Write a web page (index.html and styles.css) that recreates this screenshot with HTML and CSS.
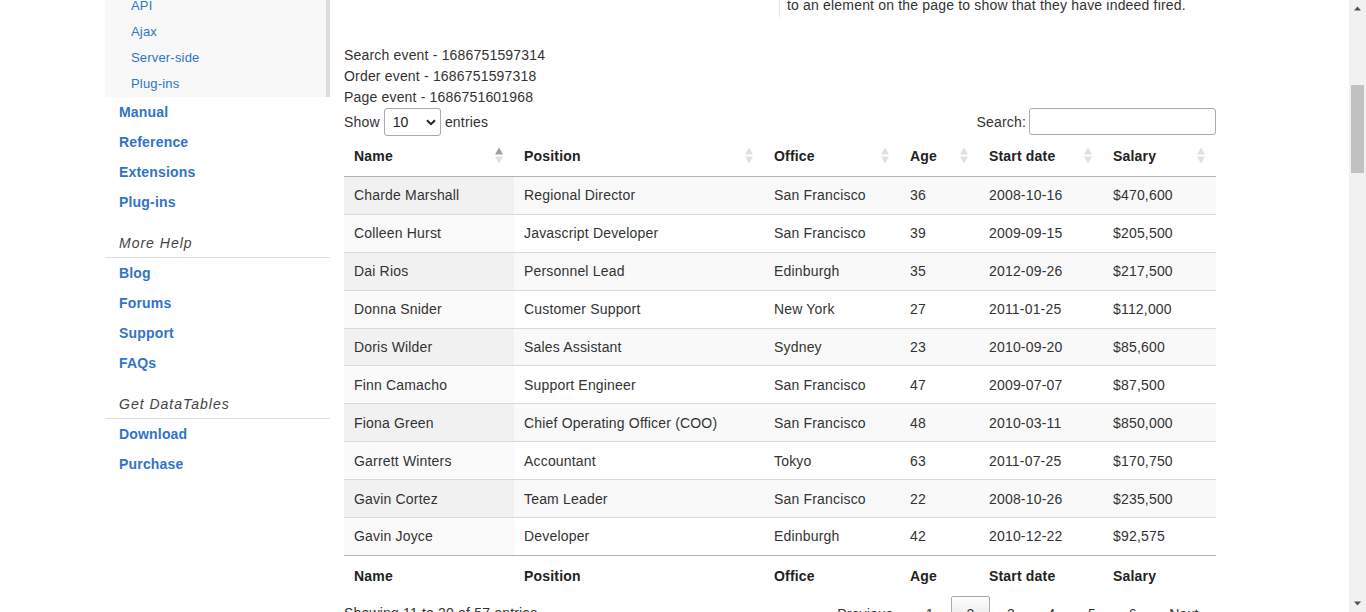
FILE: index.html
```html
<!DOCTYPE html>
<html lang="en">
<head>
<meta charset="utf-8">
<title>DataTables events example</title>
<link rel="stylesheet" href="styles.css">
</head>
<body>
<div class="screen">
  <div class="viewport">
    <div class="layout">
      <aside class="sidebar">
        <ul class="submenu">
          <li><a href="#">API</a></li>
          <li><a href="#">Ajax</a></li>
          <li><a href="#">Server-side</a></li>
          <li><a href="#">Plug-ins</a></li>
        </ul>
        <ul class="menu">
          <li><a href="#">Manual</a></li>
          <li><a href="#">Reference</a></li>
          <li><a href="#">Extensions</a></li>
          <li><a href="#">Plug-ins</a></li>
        </ul>
        <h4 class="menu-head">More Help</h4>
        <ul class="menu">
          <li><a href="#">Blog</a></li>
          <li><a href="#">Forums</a></li>
          <li><a href="#">Support</a></li>
          <li><a href="#">FAQs</a></li>
        </ul>
        <h4 class="menu-head">Get DataTables</h4>
        <ul class="menu">
          <li><a href="#">Download</a></li>
          <li><a href="#">Purchase</a></li>
        </ul>
      </aside>

      <main class="main">
        <div class="info-row">
          <div class="info-box">to an element on the page to show that they have indeed fired.</div>
        </div>

        <div class="events">
          <div>Search event - 1686751597314</div>
          <div>Order event - 1686751597318</div>
          <div>Page event - 1686751601968</div>
        </div>

        <div class="dt-wrapper">
          <div class="dt-top">
            <label class="dt-length">Show <span class="select-wrap"><select class="dt-select"><option>10</option><option>25</option><option>50</option><option>100</option></select><svg class="chev" width="10" height="7" viewBox="0 0 10 7"><polyline points="1,1.2 5,5.2 9,1.2" fill="none" stroke="#222" stroke-width="2"/></svg></span> entries</label>
            <label class="dt-filter"><span class="lbl">Search:</span><input class="dt-search" type="search"></label>
          </div>

          <table class="dt-table">
            <colgroup>
              <col class="c-name"><col class="c-pos"><col class="c-off"><col class="c-age"><col class="c-date"><col class="c-sal">
            </colgroup>
            <thead>
              <tr>
                <th><div class="th-in"><span>Name</span><svg class="sort" width="8" height="17" viewBox="0 0 8 17"><polygon class="up active" points="4,0.5 8,7.5 0,7.5"/><polygon class="down" points="0,9.5 8,9.5 4,16.5"/></svg></div></th>
                <th><div class="th-in"><span>Position</span><svg class="sort" width="8" height="17" viewBox="0 0 8 17"><polygon class="up" points="4,0.5 8,7.5 0,7.5"/><polygon class="down" points="0,9.5 8,9.5 4,16.5"/></svg></div></th>
                <th><div class="th-in"><span>Office</span><svg class="sort" width="8" height="17" viewBox="0 0 8 17"><polygon class="up" points="4,0.5 8,7.5 0,7.5"/><polygon class="down" points="0,9.5 8,9.5 4,16.5"/></svg></div></th>
                <th><div class="th-in"><span>Age</span><svg class="sort" width="8" height="17" viewBox="0 0 8 17"><polygon class="up" points="4,0.5 8,7.5 0,7.5"/><polygon class="down" points="0,9.5 8,9.5 4,16.5"/></svg></div></th>
                <th><div class="th-in"><span>Start date</span><svg class="sort" width="8" height="17" viewBox="0 0 8 17"><polygon class="up" points="4,0.5 8,7.5 0,7.5"/><polygon class="down" points="0,9.5 8,9.5 4,16.5"/></svg></div></th>
                <th><div class="th-in"><span>Salary</span><svg class="sort" width="8" height="17" viewBox="0 0 8 17"><polygon class="up" points="4,0.5 8,7.5 0,7.5"/><polygon class="down" points="0,9.5 8,9.5 4,16.5"/></svg></div></th>
              </tr>
            </thead>
            <tbody>
              <tr><td>Charde Marshall</td><td>Regional Director</td><td>San Francisco</td><td>36</td><td>2008-10-16</td><td>$470,600</td></tr>
              <tr><td>Colleen Hurst</td><td>Javascript Developer</td><td>San Francisco</td><td>39</td><td>2009-09-15</td><td>$205,500</td></tr>
              <tr><td>Dai Rios</td><td>Personnel Lead</td><td>Edinburgh</td><td>35</td><td>2012-09-26</td><td>$217,500</td></tr>
              <tr><td>Donna Snider</td><td>Customer Support</td><td>New York</td><td>27</td><td>2011-01-25</td><td>$112,000</td></tr>
              <tr><td>Doris Wilder</td><td>Sales Assistant</td><td>Sydney</td><td>23</td><td>2010-09-20</td><td>$85,600</td></tr>
              <tr><td>Finn Camacho</td><td>Support Engineer</td><td>San Francisco</td><td>47</td><td>2009-07-07</td><td>$87,500</td></tr>
              <tr><td>Fiona Green</td><td>Chief Operating Officer (COO)</td><td>San Francisco</td><td>48</td><td>2010-03-11</td><td>$850,000</td></tr>
              <tr><td>Garrett Winters</td><td>Accountant</td><td>Tokyo</td><td>63</td><td>2011-07-25</td><td>$170,750</td></tr>
              <tr><td>Gavin Cortez</td><td>Team Leader</td><td>San Francisco</td><td>22</td><td>2008-10-26</td><td>$235,500</td></tr>
              <tr><td>Gavin Joyce</td><td>Developer</td><td>Edinburgh</td><td>42</td><td>2010-12-22</td><td>$92,575</td></tr>
            </tbody>
            <tfoot>
              <tr><th>Name</th><th>Position</th><th>Office</th><th>Age</th><th>Start date</th><th>Salary</th></tr>
            </tfoot>
          </table>

          <div class="dt-bottom">
            <div class="dt-info">Showing 11 to 20 of 57 entries</div>
            <div class="dt-paginate">
              <a class="pg-btn" href="#">Previous</a><a class="pg-btn" href="#">1</a><a class="pg-btn current" href="#">2</a><a class="pg-btn" href="#">3</a><a class="pg-btn" href="#">4</a><a class="pg-btn" href="#">5</a><a class="pg-btn" href="#">6</a><a class="pg-btn" href="#">Next</a>
            </div>
          </div>
        </div>
      </main>
    </div>
  </div>

  <div class="scrollbar">
    <div class="sb-btn"><svg width="17" height="17" viewBox="0 0 17 17"><polygon points="8.5,6.5 12,10.5 5,10.5" fill="#505050"/></svg></div>
    <div class="sb-track"><div class="sb-thumb"></div></div>
    <div class="sb-btn"><svg width="17" height="17" viewBox="0 0 17 17"><polygon points="5,6.5 12,6.5 8.5,10.5" fill="#505050"/></svg></div>
  </div>
</div>
</body>
</html>
```

FILE: styles.css
```css
html, body {
  margin: 0;
  padding: 0;
  height: 612px;
  overflow: hidden;
  background: #fff;
}

body {
  font-family: "Liberation Sans", Arial, Helvetica, sans-serif;
  font-size: 14px;
  line-height: 21px;
  letter-spacing: 0.18px;
  color: #333;
}

a {
  text-decoration: none;
}

.screen {
  display: flex;
  width: 1366px;
  height: 612px;
}

.viewport {
  flex: 1;
  height: 612px;
  overflow: hidden;
}

.layout {
  display: flex;
  align-items: flex-start;
  margin-top: -8px;
  padding-left: 105px;
}

/* ---------- sidebar ---------- */
.sidebar {
  width: 225px;
  flex: none;
}

.submenu {
  list-style: none;
  margin: 0;
  padding: 1px 0 0 26px;
  background: #f8f8f8;
  border-right: 4px solid #ddd;
}

.submenu li {
  line-height: 26px;
  font-size: 13px;
}

.submenu a {
  color: #3174c7;
}

.menu {
  list-style: none;
  margin: 0;
  padding: 0;
}

.menu li {
  line-height: 30px;
  padding-left: 14px;
  font-size: 14px;
  font-weight: bold;
}

.menu a {
  color: #3174c7;
}

.menu-head {
  margin: 15px 0 0;
  padding: 0 0 3px 14px;
  line-height: 22px;
  font-size: 14px;
  font-weight: normal;
  font-style: italic;
  letter-spacing: 1px;
  color: #444;
  border-bottom: 1px solid #ddd;
}

/* ---------- main ---------- */
.main {
  width: 872px;
  margin-left: 14px;
  flex: none;
}

.info-row {
  display: flex;
  justify-content: flex-end;
  margin-top: 3px;
}

.info-box {
  width: 437px;
  box-sizing: border-box;
  border-left: 1px solid #e6e6e6;
  padding: 0 0 1px 7px;
  line-height: 21px;
}

.events {
  margin-top: 28px;
  line-height: 21px;
}

.dt-top {
  display: flex;
  justify-content: space-between;
  align-items: flex-start;
  height: 27px;
}

.dt-length,
.dt-filter {
  display: flex;
  align-items: center;
  height: 28px;
  white-space: pre;
}

.dt-filter {
  height: 27px;
}

.lbl {
  padding-top: 2px;
}

.select-wrap {
  display: inline-flex;
  align-items: center;
  position: relative;
}

.dt-select {
  -webkit-appearance: none;
  appearance: none;
  width: 57px;
  height: 28px;
  box-sizing: border-box;
  border: 1px solid #aaa;
  border-radius: 3px;
  padding: 0 0 0 8px;
  background: transparent;
  font-family: inherit;
  font-size: 14px;
  color: #222;
}

.chev {
  position: absolute;
  right: 5px;
  top: 11px;
  pointer-events: none;
}

.dt-search {
  width: 187px;
  height: 27px;
  box-sizing: border-box;
  margin: 0 0 0 3px;
  border: 1px solid #aaa;
  border-radius: 3px;
  padding: 5px;
  background: transparent;
  font-family: inherit;
  font-size: 14px;
}

/* ---------- table ---------- */
.dt-table {
  width: 872px;
  table-layout: fixed;
  border-collapse: separate;
  border-spacing: 0;
}

.c-name { width: 170px; }
.c-pos  { width: 250px; }
.c-off  { width: 136px; }
.c-age  { width: 79px; }
.c-date { width: 124px; }
.c-sal  { width: 113px; }

.dt-table thead th {
  text-align: left;
  font-weight: bold;
  color: #222;
  padding: 11px 11px 9px 10px;
  line-height: 21px;
  border-bottom: 1px solid #b3b3b3;
}

.th-in {
  display: flex;
  justify-content: space-between;
  align-items: center;
}

.sort {
  margin-top: -2px;
}

.sort polygon {
  fill: #e0e0e0;
}

.sort polygon.active {
  fill: #a0a0a0;
}

.dt-table tbody td {
  padding: 8.4px 10px 7.6px;
  line-height: 20.9px;
  border-top: 1px solid #d9d9d9;
  background: #fff;
  white-space: nowrap;
}

.dt-table tbody tr:first-child td {
  border-top: none;
}

.dt-table tbody tr:nth-child(odd) td {
  background: #f9f9f9;
}

.dt-table tbody tr:nth-child(odd) td:first-child {
  background: #f1f1f1;
}

.dt-table tbody tr:nth-child(even) td:first-child {
  background: #fafafa;
}

.dt-table tfoot th {
  text-align: left;
  font-weight: bold;
  color: #222;
  padding: 10px 10px 6px 10px;
  line-height: 21px;
  border-top: 1px solid #b3b3b3;
}

/* ---------- bottom ---------- */
.dt-bottom {
  display: flex;
  justify-content: space-between;
  align-items: flex-start;
}

.dt-info {
  padding-top: 10.5px;
}

.dt-paginate {
  padding-top: 3.5px;
  margin-right: 2px;
  display: flex;
}

.pg-btn {
  display: block;
  min-width: 21px;
  box-sizing: border-box;
  padding: 7px 14.3px;
  margin-left: 2px;
  text-align: center;
  border: 1px solid transparent;
  border-radius: 2px;
  color: #333;
  line-height: 21px;
}

.pg-btn.current {
  border-color: #aaa;
  background: linear-gradient(to bottom, #ffffff 0%, #dcdcdc 100%);
}

/* ---------- scrollbar ---------- */
.scrollbar {
  width: 17px;
  flex: none;
  height: 612px;
  background: #f1f1f1;
  display: flex;
  flex-direction: column;
}

.sb-btn {
  height: 17px;
  flex: none;
}

.sb-btn svg {
  display: block;
}

.sb-track {
  flex: 1;
}

.sb-thumb {
  margin: 68px 2px 0;
  height: 88px;
  background: #c1c1c1;
}
```
